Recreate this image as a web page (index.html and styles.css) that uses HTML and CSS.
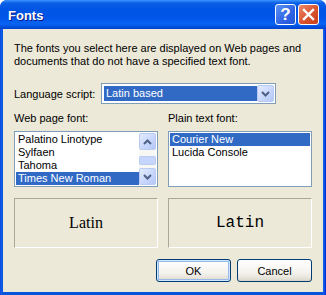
FILE: index.html
```html
<!DOCTYPE html>
<html lang="en">
<head>
    <meta charset="UTF-8">
    <title>Fonts</title>
    <link rel="stylesheet" href="styles.css">
</head>
<body>
    <div class="window">
        <!-- Barra de título -->
        <div class="titlebar">
            <span class="title">Fonts</span>
            <div class="tb-buttons">
                <span class="tb-btn help">?</span>
                <span class="tb-btn close">
                    <svg width="13" height="13" viewBox="0 0 13 13">
                        <path d="M2 2 L11 11 M11 2 L2 11" stroke="#fff" stroke-width="2.4" stroke-linecap="square"/>
                    </svg>
                </span>
            </div>
        </div>

        <div class="client">
            <p class="intro">The fonts you select here are displayed on Web pages and documents that do not have a specified text font.</p>

            <div class="lang-row">
                <span class="lang-label">Language script:</span>
                <div class="combo">
                    <span class="combo-value">Latin based</span>
                    <span class="combo-btn">
                        <svg width="9" height="6" viewBox="0 0 9 6">
                            <path d="M1 1 L4.5 4.5 L8 1" stroke="#4d6185" stroke-width="2" fill="none"/>
                        </svg>
                    </span>
                </div>
            </div>

            <div class="cols">
                <div class="col">
                    <div class="col-label">Web page font:</div>
                    <div class="listbox">
                        <div class="items">
                            <div class="item">Palatino Linotype</div>
                            <div class="item">Sylfaen</div>
                            <div class="item">Tahoma</div>
                            <div class="item selected">Times New Roman</div>
                        </div>
                        <div class="scrollbar">
                            <span class="sb-btn">
                                <svg width="9" height="6" viewBox="0 0 9 6"><path d="M1 5 L4.5 1.5 L8 5" stroke="#4d6185" stroke-width="2" fill="none"/></svg>
                            </span>
                            <span class="sb-track"><span class="sb-thumb"></span></span>
                            <span class="sb-btn">
                                <svg width="9" height="6" viewBox="0 0 9 6"><path d="M1 1 L4.5 4.5 L8 1" stroke="#4d6185" stroke-width="2" fill="none"/></svg>
                            </span>
                        </div>
                    </div>
                </div>
                <div class="col">
                    <div class="col-label">Plain text font:</div>
                    <div class="listbox">
                        <div class="items">
                            <div class="item selected">Courier New</div>
                            <div class="item">Lucida Console</div>
                        </div>
                    </div>
                </div>
            </div>

            <div class="previews">
                <div class="preview serif">Latin</div>
                <div class="preview mono">Latin</div>
            </div>

            <div class="buttons">
                <button class="btn default">OK</button>
                <button class="btn">Cancel</button>
            </div>
        </div>
    </div>
</body>
</html>
```

FILE: styles.css
```css
body {
    margin: 0;
    background: #fff;
    font-family: "Liberation Sans", Arial, sans-serif;
    font-size: 11px;
    color: #000;
}
.window {
    width: 326px;
    height: 295px;
    display: flex;
    flex-direction: column;
    border-radius: 7px 7px 0 0;
    background: linear-gradient(to right, #0831d9 0, #166aee 1px, #0855dd 2px, #0855dd 323px, #166aee 324px, #0831d9 325px);
    overflow: hidden;
}
.titlebar {
    height: 29px;
    flex-shrink: 0;
    display: flex;
    align-items: center;
    justify-content: space-between;
    padding: 0 7px 0 8px;
    background: linear-gradient(to bottom, #3d95ff 0, #0a5fe6 3px, #0055e5 9px, #0257ea 19px, #0a64f2 24px, #0047d5 28px, #0042cc 29px);
}
.title {
    color: #fff;
    font-weight: bold;
    font-size: 13px;
    text-shadow: 1px 1px 0 #0a1883;
    margin-top: 1px;
}
.tb-buttons {
    display: flex;
    gap: 2px;
}
.tb-btn {
    width: 19px;
    height: 19px;
    border: 1px solid #fff;
    border-radius: 3px;
    display: flex;
    align-items: center;
    justify-content: center;
}
.help {
    background: linear-gradient(135deg, #5d93f5 0, #2f63e3 60%, #2456d6 100%);
    color: #fff;
    font-weight: bold;
    font-size: 17px;
    line-height: 19px;
}
.close {
    background: linear-gradient(135deg, #ec8a6a 0, #d9532e 55%, #c6401c 100%);
}
.client {
    flex: 1;
    margin: 0 3px 3px;
    background: #ece9d8;
    padding: 13px 11px 10px;
}
.intro {
    margin: 0;
    line-height: 13px;
}
.lang-row {
    display: flex;
    align-items: center;
    margin-top: 15px;
}
.lang-label {
    width: 87px;
}
.combo {
    width: 175px;
    height: 21px;
    box-sizing: border-box;
    border: 1px solid #7f9db9;
    background: #fff;
    padding: 1px;
    display: flex;
}
.combo-value {
    flex: 1;
    margin: 1px 0 1px 1px;
    background: #316ac5;
    color: #fff;
    padding-left: 2px;
    line-height: 15px;
}
.combo-btn, .sb-btn {
    width: 17px;
    box-sizing: border-box;
    border: 1px solid #b9cbf3;
    border-radius: 2px;
    background: linear-gradient(135deg, #e3ebfe 0, #c6d5fc 60%, #b4c8f6 100%);
    display: flex;
    align-items: center;
    justify-content: center;
}
.cols {
    display: grid;
    grid-template-columns: 1fr 1fr;
    gap: 10px;
    margin-top: 8px;
}
.col-label {
    line-height: 13px;
}
.listbox {
    margin-top: 6px;
    height: 56px;
    box-sizing: border-box;
    border: 1px solid #7f9db9;
    background: #fff;
    padding: 1px;
    display: flex;
}
.items {
    flex: 1;
}
.item {
    height: 13px;
    line-height: 13px;
    padding-left: 2px;
    white-space: nowrap;
}
.item.selected {
    background: #316ac5;
    color: #fff;
}
.scrollbar {
    width: 17px;
    display: flex;
    flex-direction: column;
    background: #f7f7f3;
}
.sb-btn {
    height: 17px;
}
.sb-track {
    flex: 1;
    display: flex;
    flex-direction: column;
    justify-content: flex-end;
    padding-bottom: 3px;
}
.sb-thumb {
    height: 7px;
    border: 1px solid #b9cbf3;
    border-radius: 2px;
    background: #c6d5fc;
}
.previews {
    display: grid;
    grid-template-columns: 1fr 1fr;
    gap: 10px;
    margin-top: 11px;
}
.preview {
    height: 50px;
    box-sizing: border-box;
    border: 1px solid;
    border-color: #aca899 #fff #fff #aca899;
    display: flex;
    align-items: center;
    justify-content: center;
}
.serif {
    font-family: "Liberation Serif", "Times New Roman", serif;
    font-size: 16px;
}
.mono {
    font-family: "Liberation Mono", "Courier New", monospace;
    font-size: 16px;
    font-weight: 300;
}
.buttons {
    display: flex;
    justify-content: flex-end;
    gap: 6px;
    margin-top: 11px;
}
.btn {
    width: 75px;
    height: 23px;
    border: 1px solid #003c74;
    border-radius: 3px;
    background: linear-gradient(to bottom, #fff 0, #f4f3ee 60%, #e3e0d6 90%, #d6d0c5 100%);
    font-family: "Liberation Sans", Arial, sans-serif;
    font-size: 11px;
    color: #000;
    padding: 0;
}
.btn.default {
    box-shadow: inset 0 0 0 1px #cee7ff, inset 0 0 0 2px #98b8ea;
}
```
